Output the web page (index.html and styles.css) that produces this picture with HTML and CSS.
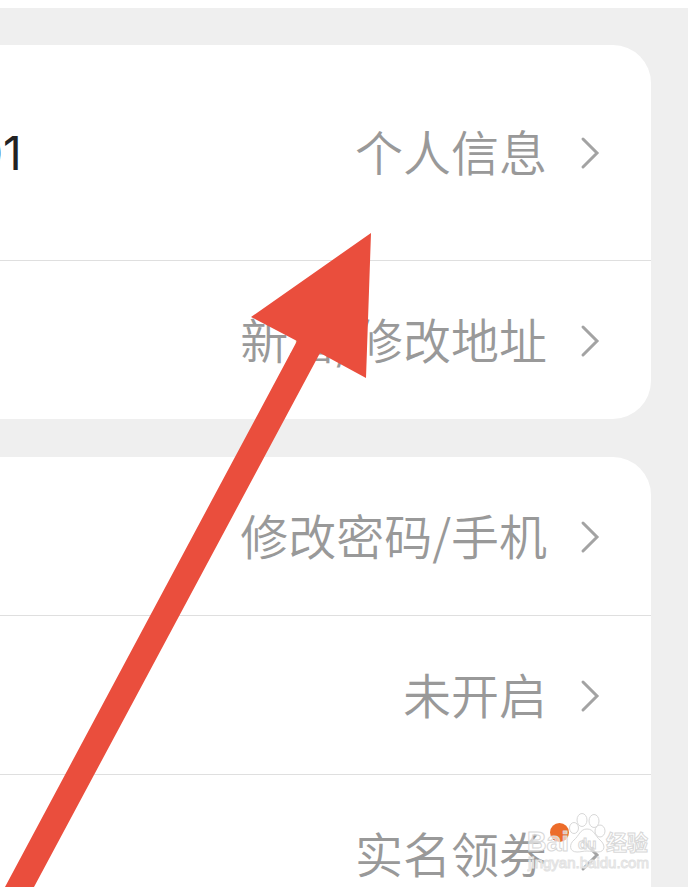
FILE: index.html
```html
<!DOCTYPE html>
<html lang="zh-CN">
<head>
  <meta charset="UTF-8">
  <meta name="viewport" content="width=device-width, initial-scale=1.0">
  <title>账户设置</title>
  <link rel="stylesheet" href="styles.css">
</head>
<body>
  <main class="settings">
    <section class="card">
      <a class="row row-profile" href="#profile">
        <span class="account">01</span>
        <span class="value">个人信息</span>
        <svg class="chevron" viewBox="0 0 20 34"><path d="M3 3 17 17 3 31"/></svg>
      </a>
      <a class="row" href="#address">
        <span class="value">新增/修改地址</span>
        <svg class="chevron" viewBox="0 0 20 34"><path d="M3 3 17 17 3 31"/></svg>
      </a>
    </section>

    <section class="card">
      <a class="row" href="#security">
        <span class="value">修改密码/手机</span>
        <svg class="chevron" viewBox="0 0 20 34"><path d="M3 3 17 17 3 31"/></svg>
      </a>
      <a class="row" href="#payment">
        <span class="value">未开启</span>
        <svg class="chevron" viewBox="0 0 20 34"><path d="M3 3 17 17 3 31"/></svg>
      </a>
      <a class="row" href="#coupon">
        <span class="value">实名领券<span class="dot"></span></span>
        <svg class="chevron" viewBox="0 0 20 34"><path d="M3 3 17 17 3 31"/></svg>
      </a>
    </section>

    <svg class="arrow" viewBox="0 0 372 654">
      <path d="M371 0 251 84 297 108 5 654H34L320 120 366 145Z"/>
    </svg>

    <svg class="watermark" viewBox="0 0 130 66">
      <g class="paw">
        <ellipse cx="47" cy="19" rx="4.5" ry="5.5"/>
        <ellipse cx="55" cy="11" rx="5" ry="6.5"/>
        <ellipse cx="67" cy="12" rx="5" ry="6.5"/>
        <ellipse cx="73" cy="22" rx="5" ry="6"/>
        <path d="M60 20C53 20 52 27 47 31 42 35 42 43 50 43 54 43 56 42 60 42 64 42 66 43 71 43 78 43 79 36 73 31 68 27 67 20 60 20Z"/>
      </g>
      <text class="brand" x="0" y="42">Bai</text>
      <text class="brand brand-du" x="51" y="40">du</text>
      <text class="brand brand-cn" x="79" y="41">经验</text>
      <text class="site" x="1" y="59">jingyan.baidu.com</text>
    </svg>
  </main>
</body>
</html>
```

FILE: styles.css
```css
* { margin: 0; padding: 0; box-sizing: border-box; }
body {
  font-family: "Noto Sans CJK SC", sans-serif;
  background: #efefef;
  color: #999;
}
.settings {
  position: relative;
  height: 100vh;
  overflow: hidden;
  padding-right: 37px;
  border-top: 8px solid #fff;
}

.card {
  margin-top: 37px;
  background: #fff;
  border-radius: 0 38px 38px 0;
}
.card + .card {
  margin-top: 38px;
}
.row {
  display: flex;
  align-items: center;
  justify-content: flex-end;
  gap: 33px;
  padding: 45px 51px 43px 0;
  color: #999;
  font-size: 48px;
  font-weight: 350;
  line-height: 64px;
  text-decoration: none;
}
.row + .row {
  border-top: 1px solid #dfdfdf;
}
.row-profile {
  padding-top: 73px;
  padding-bottom: 72px;
}
.account {
  margin-left: -26px;
  margin-right: auto;
  color: #222;
  font-family: Inter, sans-serif;
  font-size: 46px;
  font-weight: 400;
}
.value {
  position: relative;
  margin-bottom: 6px;
}
.chevron {
  width: 20px;
  height: 34px;
  fill: none;
  stroke: #a3a3a3;
  stroke-width: 3;
  stroke-linecap: round;
}

.dot {
  position: absolute;
  top: 3px;
  right: -22px;
  width: 19px;
  height: 19px;
  border-radius: 50%;
  background: #ec6c2a;
}

.arrow {
  position: absolute;
  top: 225px;
  left: 0;
  width: 372px;
  height: 654px;
  fill: #ea4e3d;
}

.watermark {
  position: absolute;
  right: 31px;
  bottom: 12px;
  width: 130px;
  height: 66px;
  fill: #fff;
  fill-opacity: 0.6;
  stroke: #d8d8d8;
  stroke-width: 1;
}
.brand {
  font-family: "Liberation Sans", sans-serif;
  font-size: 27px;
  font-weight: 700;
}
.brand-du {
  font-size: 15px;
}
.brand-cn {
  font-family: "Noto Sans CJK SC", sans-serif;
  font-size: 21px;
}
.site {
  font-family: "Liberation Sans", sans-serif;
  font-size: 15px;
  stroke: #e2e2e2;
}
```
